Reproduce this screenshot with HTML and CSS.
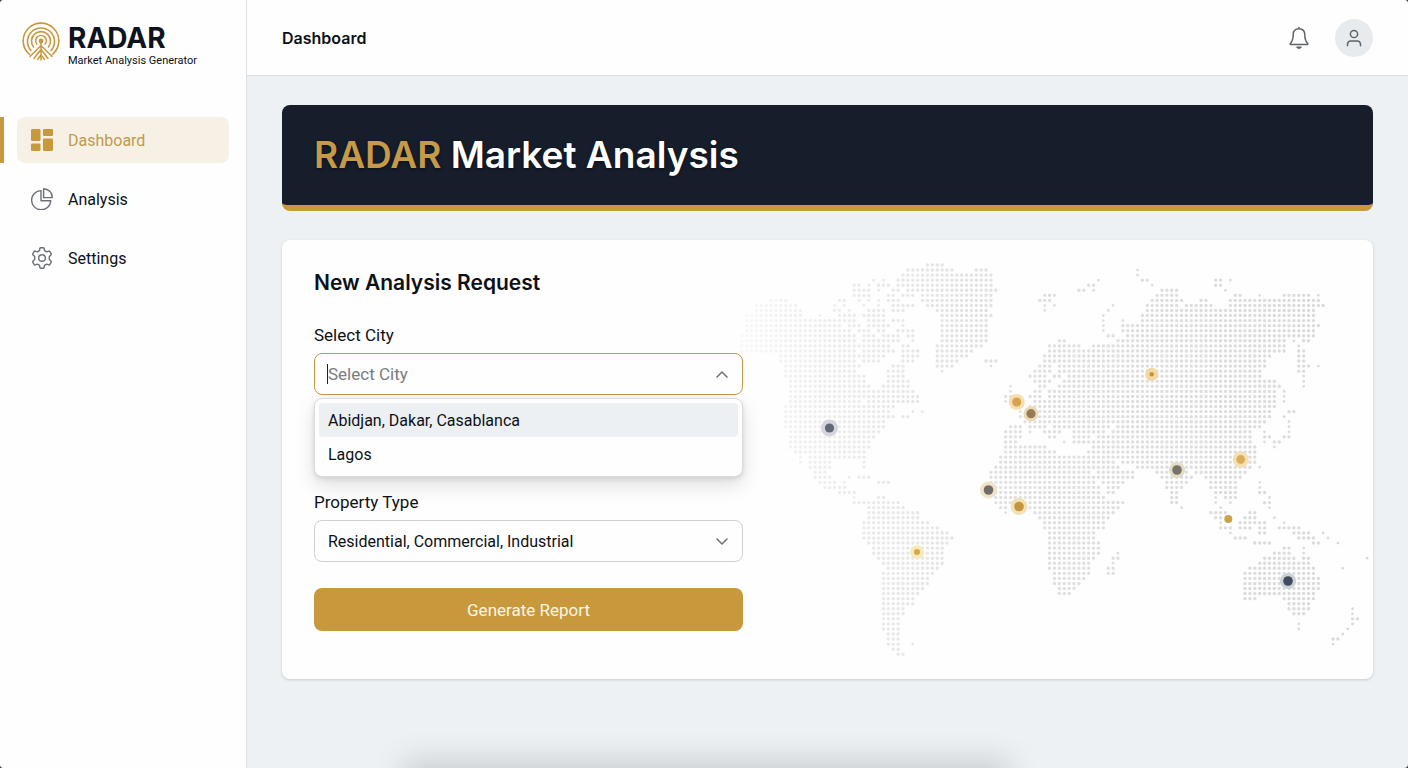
FILE: index.html
```html
<!DOCTYPE html>
<html lang="en">
<head>
<meta charset="utf-8">
<meta name="viewport" content="width=device-width, initial-scale=1">
<title>RADAR Market Analysis</title>
<link rel="stylesheet" href="styles.css">
</head>
<body>
<div class="app">
  <aside class="sidebar">
    <div class="brand">
      <svg class="brand-logo" viewBox="0 0 38 40" aria-hidden="true">
        <g fill="none" stroke="#c8993c" stroke-width="1.600" stroke-linecap="round">
          <path d="M7.500 32.500A17.800 17.800 0 1 1 30.500 32.500"/>
          <path d="M9 28.500A13.500 13.500 0 1 1 29 28.500"/>
          <path d="M11.500 25A9.500 9.500 0 1 1 26.500 25"/>
          <path d="M14.800 22A5.300 5.300 0 1 1 23.200 22"/>
          <path d="M19 20v18M18 24.500L8 34.500M20 24.500L30 34.500M18.500 28L12 36.500M19.500 28L26 36.500M19 33L15.500 37.500M19 33L22.500 37.500" stroke-width="1.500"/>
        </g>
        <circle cx="19" cy="19" r="2.400" fill="#c8993c"/>
      </svg>
      <div>
        <div class="brand-name">RADAR</div>
        <div class="brand-tagline">Market Analysis Generator</div>
      </div>
    </div>
    <nav class="nav">
      <a class="nav-item active" href="#dashboard" aria-current="page">
        <svg class="nav-icon" viewBox="0 0 22 22" aria-hidden="true" fill="#c8993c"><rect x="0" y="0" width="9.500" height="12" rx="1.200"/><rect x="12" y="0" width="10" height="7" rx="1.200"/><rect x="0" y="14.500" width="9.500" height="7.500" rx="1.200"/><rect x="12" y="9.500" width="10" height="12.500" rx="1.200"/></svg>
        Dashboard
      </a>
      <a class="nav-item" href="#analysis">
        <svg class="nav-icon" viewBox="0 0 22 22" aria-hidden="true" fill="none" stroke="#6b6f76" stroke-width="1.400" stroke-linejoin="round"><path d="M10 2.600A9.600 9.600 0 1 0 19.800 12.700H10Z"/><path d="M12.600 0.700V9.600H21.300A8.800 8.800 0 0 0 12.600 0.700Z"/></svg>
        Analysis
      </a>
      <a class="nav-item" href="#settings">
        <svg class="nav-icon" viewBox="0 0 22 22" aria-hidden="true" fill="none" stroke="#6b6f76" stroke-width="1.400" stroke-linejoin="round"><path d="M8.900 1.500Q9 0.700 9.800 0.700H12.200Q13 0.700 13.100 1.500L13.500 3.600L15.700 4.900L17.700 4.100Q18.500 3.900 18.900 4.600L20.100 6.700Q20.500 7.400 19.900 8L18.300 9.600V12.400L19.900 14Q20.500 14.600 20.100 15.300L18.900 17.400Q18.500 18.100 17.700 17.900L15.700 17.100L13.500 18.400L13.100 20.500Q13 21.300 12.200 21.300H9.800Q9 21.300 8.900 20.500L8.500 18.400L6.300 17.100L4.300 17.900Q3.500 18.100 3.100 17.400L1.900 15.300Q1.500 14.600 2.100 14L3.700 12.400V9.600L2.100 8Q1.500 7.400 1.900 6.700L3.100 4.600Q3.500 3.900 4.300 4.100L6.300 4.900L8.500 3.600Z"/><circle cx="11" cy="11" r="3.300"/></svg>
        Settings
      </a>
    </nav>
  </aside>

  <div class="main">
    <header class="topbar">
      <span class="topbar-title">Dashboard</span>
      <div class="topbar-actions">
        <button class="icon-button" type="button" aria-label="Notifications">
          <svg width="20" height="24" viewBox="0 0 20 24" fill="none" stroke="#5f646b" stroke-width="1.500" stroke-linecap="round" stroke-linejoin="round"><path d="M10 2.800C6 2.800 4.200 5.600 4.200 8.800C4.200 14 3.200 15.600 1.200 17.800V18.500H18.800V17.800C16.800 15.600 15.800 14 15.800 8.800C15.800 5.600 14 2.800 10 2.800ZM10 2.800V1.600"/><path d="M8 21.300Q10 23 12 21.300Z" fill="#5f646b"/></svg>
        </button>
        <button class="avatar" type="button" aria-label="Account">
          <svg width="16" height="18" viewBox="0 0 16 18" fill="none" stroke="#5f646b" stroke-width="1.500" stroke-linecap="round"><circle cx="8" cy="5" r="3.600"/><path d="M1.500 16.700V15A3.400 3.400 0 0 1 4.900 11.900H11.100A3.400 3.400 0 0 1 14.500 15V16.700"/></svg>
        </button>
      </div>
    </header>

    <main class="content">
      <section class="banner">
        <h1 class="banner-title"><span class="gold">RADAR</span> Market Analysis</h1>
      </section>

      <section class="card">
        <form class="request">
          <h2 class="request-title">New Analysis Request</h2>
          <label class="label" for="city">Select City</label>
          <div class="control">
            <input class="field field-open" id="city" type="text" placeholder="Select City" role="combobox" aria-expanded="true" aria-controls="city-list" autocomplete="off">
            <span class="caret"></span>
            <svg class="chevron" viewBox="0 0 12 7" aria-hidden="true"><path d="M1 6L6 1L11 6"/></svg>
          </div>
          <div class="menu" id="city-list" role="listbox">
            <button class="option selected" type="button" role="option" aria-selected="true">Abidjan, Dakar, Casablanca</button>
            <button class="option" type="button" role="option" aria-selected="false">Lagos</button>
          </div>
          <label class="label" for="property">Property Type</label>
          <div class="control">
            <select class="field" id="property"><option>Residential, Commercial, Industrial</option></select>
            <svg class="chevron" viewBox="0 0 12 7" aria-hidden="true"><path d="M1 1L6 6L11 1"/></svg>
          </div>
          <button class="submit" type="button">Generate Report</button>
        </form>
        <svg class="map" viewBox="0 0 630 372" role="img" aria-label="World map">
          <defs>
            <linearGradient id="fade" gradientUnits="userSpaceOnUse" x1="-11" y1="0" x2="630" y2="0">
              <stop offset="0" stop-color="#f9f9fa"/>
              <stop offset="0.120" stop-color="#efeff0"/>
              <stop offset="0.400" stop-color="#e1e1e2"/>
              <stop offset="1" stop-color="#d9dada"/>
            </linearGradient>
          </defs>
          <path id="land" fill="url(#fade)"/>
          <g id="pins"></g>
        </svg>
      </section>
    </main>
  </div>
</div>
<script src="map.js"></script>
</body>
</html>
```
FILE: styles.css
```css
* { box-sizing: border-box; }

body {
  margin: 0;
  background: #3a3d42;
  color: #0d1117;
  font-family: Roboto, "Liberation Sans", sans-serif;
  font-size: 16px;
}

button, input, select { font: inherit; color: inherit; }

.app {
  display: flex;
  min-height: 100vh;
  border-radius: 4px;
  overflow: hidden;
  background: #edf1f3;
}

.sidebar {
  flex: 0 0 247px;
  background: #fefefe;
  border-right: 1px solid #dfe2e4;
}

.brand {
  display: flex;
  gap: 8px;
  padding: 22px 16px 0 22px;
}
.brand-logo { width: 38px; height: 40px; }
.brand-name {
  font-family: Inter, "Liberation Sans", sans-serif;
  font-size: 28px;
  font-weight: 700;
  line-height: 33px;
  color: #0d1320;
}
.brand-tagline {
  font-size: 11px;
  line-height: 12px;
  white-space: nowrap;
}

.nav {
  display: flex;
  flex-direction: column;
  gap: 13px;
  padding: 50px 17px 0;
}
.nav-item {
  position: relative;
  display: flex;
  align-items: center;
  gap: 15px;
  height: 46px;
  padding: 0 14px;
  border-radius: 8px;
  color: inherit;
  text-decoration: none;
}
.nav-item.active { background: #f7f1e5; color: #c09a50; }
.nav-item.active::before {
  content: "";
  position: absolute;
  inset: 0 auto 0 -17px;
  width: 4px;
  background: #c8993c;
}
.nav-icon { width: 22px; height: 22px; }

.main {
  position: relative;
  flex: 1;
  min-width: 0;
  overflow: hidden;
}
.main::after {
  content: "";
  position: absolute;
  top: 100%;
  left: 14%;
  right: 35%;
  height: 20px;
  box-shadow: 0 0 30px 6px rgba(60, 65, 65, 0.22);
}

.topbar {
  display: flex;
  align-items: center;
  justify-content: space-between;
  height: 76px;
  padding: 0 35px;
  background: #fefefe;
  border-bottom: 1px solid #dcdfe1;
}
.topbar-title {
  font-family: Inter, "Liberation Sans", sans-serif;
  font-weight: 600;
}
.topbar-actions { display: flex; align-items: center; gap: 26px; }
.icon-button, .avatar {
  display: grid;
  place-items: center;
  padding: 0;
  border: 0;
  background: none;
}
.avatar {
  width: 38px;
  height: 38px;
  border-radius: 50%;
  background: #e8ebee;
}

.content { padding: 29px 35px; }

.banner {
  padding: 25px 32px;
  border-bottom: 6px solid #c8993c;
  border-radius: 8px;
  background: #161d2b;
}
.banner-title {
  margin: 0;
  color: #fff;
  font-family: Inter, "Liberation Sans", sans-serif;
  font-size: 37px;
  font-weight: 600;
  line-height: 50px;
  text-shadow: 0 1px 3px rgba(0, 0, 0, 0.5);
}
.gold { color: #c59a48; }

.card {
  display: grid;
  grid-template-columns: 429fr 630fr;
  align-items: start;
  margin-top: 29px;
  padding: 27px 0 48px 32px;
  border-radius: 8px;
  background: #fefefe;
  box-shadow: 0 1px 3px rgba(30, 45, 55, 0.18);
}
.request { position: relative; z-index: 1; min-width: 0; }
.request-title {
  margin: 0 0 26px;
  font-family: Inter, "Liberation Sans", sans-serif;
  font-size: 21px;
  font-weight: 600;
  line-height: 32px;
}
.label {
  display: block;
  margin-bottom: 8px;
  font-size: 17px;
  line-height: 20px;
}
.control { position: relative; }
.field {
  display: block;
  width: 100%;
  height: 42px;
  padding: 0 40px 0 13px;
  border: 1px solid #cfd1d5;
  border-radius: 8px;
  background: #fefefe;
  appearance: none;
  outline: none;
}
.field-open { border-color: #c29b42; font-size: 17px; }
.field::placeholder { color: #797c81; opacity: 1; }
.caret {
  position: absolute;
  top: 11px;
  left: 13px;
  width: 1px;
  height: 20px;
  background: #222;
}
.chevron {
  position: absolute;
  top: 18px;
  right: 15px;
  width: 12px;
  height: 7px;
  fill: none;
  stroke: #6b6f76;
  stroke-width: 1.5;
  stroke-linecap: round;
  stroke-linejoin: round;
  overflow: visible;
  pointer-events: none;
}
.menu {
  margin: 3px 0 15px;
  padding: 4px 4px 5px;
  border: 1px solid #d9dbde;
  border-radius: 8px;
  background: #fefefe;
  box-shadow: 0 8px 20px rgba(0, 0, 0, 0.13), 0 2px 5px rgba(0, 0, 0, 0.1);
}
.option {
  display: block;
  width: 100%;
  height: 34px;
  padding: 0 9px;
  border: 0;
  border-radius: 4px;
  background: none;
  text-align: left;
}
.option.selected { background: #edf0f2; }
.submit {
  display: block;
  width: 100%;
  height: 43px;
  margin-top: 26px;
  border: 0;
  border-radius: 8px;
  background: #c8993c;
  color: #fbf5e6;
  font-size: 17px;
}

.map {
  display: block;
  width: 100%;
  margin-top: -10px;
  overflow: visible;
}

@media (max-width: 900px) {
  .sidebar { display: none; }
  .card { grid-template-columns: 1fr; padding-right: 32px; }
  .map { margin-top: 24px; }
}
```
FILE: map.js
```js
// Each entry is one row of land dots, as grid columns or column ranges.
const rows = [
  "40-43",
  "36-45 50-52 83",
  "35-45 46-53 83",
  "34-53 29 31 75 84-85 99-100 102",
  "25-26 28 30-32 34-53 73-74 86 99-100",
  "25-28 30 33-34 36-54 71-72 74 88-91 101",
  "25-28 32-33 35-37 39-53 64-66 87-91 103-104 108 113-118 120",
  "8-11 22-23 26 28 30 32-34 39-53 63-65 86-92 96-97 102-120",
  "5-13 21 23 27 30 33-37 40-53 64 66 78 85-91 93-98 102-121",
  "5-14 21-22 24 28-31 33-35 42-52 64 77 85-119",
  "3-14 18 22-25 27-31 43-53 76 84-119",
  "3-20 21-25 28-31 33-35 43-52 76 80 84-119",
  "3-22 24-26 28-32 35 43-52 76 80-120",
  "3-24 26-28 30-31 34-37 43-52 76 80-119",
  "2-25 27-29 31-34 36-37 43-52 77-78 81-119",
  "2-25 27-34 37 43-52 67-68 79-113 115 117-118",
  "2-32 35-36 42-51 65-71 74-113 116",
  "2-25 27-33 35-38 42-49 65-113 116-117",
  "10-31 35-38 42-48 64-110 116-117",
  "10-25 27-30 35-37 42-46 52-54 64-109 116-117",
  "11-26 33-35 42-45 53 63-65 67-109 116-118 120",
  "11-25 32-35 43 62-65 67-108 116-117",
  "11-27 32-35 61-64 66-67 69-108 117",
  "12-27 32-36 62-65 68-111 117",
  "12-28 31-36 57 63-64 67-112 117",
  "12-30 31-37 57 62-63 65-111 113",
  "12-30 31-38 56-57 61-63 65-111 113",
  "12-26 28-38 56 58-59 62-111 113",
  "11-33 61-111",
  "11-32 37 39 59 61-110 114-115",
  "11-33 35-36 59-110 113",
  "11-31 60-109 114",
  "11-31 57-59 61-64 66-77 79-108 114",
  "12-30 56-59 61 64-67 70-76 78-106 109 114",
  "12-29 56-59 65-66 70-73 75-106 109-110 113-114",
  "12-28 56-58 68 70-106 109 111-112",
  "12-28 56-64 74-107 111",
  "13-27 56-66 73-107",
  "14 16-27 55-107",
  "14 16-20 27 55-73 74-78 80-107",
  "16-20 27 54-73 74-79 83-106 108",
  "17-19 53-73 75-82 87-93 95-105",
  "17-20 24 26-28 53-74 75-82 88-94 97-104",
  "18-21 23 30-32 53-74 76-80 89-93 98-103 108",
  "19-23 53-75 77-79 89-92 98-103 108",
  "22-25 53-75 77-78 90-91 99-103 108-109",
  "25 30-31 54-76 90-91 99 101-103 110",
  "25-27 28-34 54-80 90-91 99 102 109-110",
  "28-35 55-56 58-79 92 100 110",
  "28-38 56 62-78 98-101 106-107",
  "28-38 63-77 99-100 105-107 111",
  "27-40 64-76 100 104-107 108-109 113",
  "27-42 64-76 100-102 104-106 108-109 112-116",
  "27-44 65-74 102 108-109 115-118 121",
  "27-45 65-74 103-105 116-119 122",
  "28-44 65-75 107-110 119-120 124",
  "29-43 65-75 113-114 117",
  "29-43 65-75 79 111-114 117",
  "30-43 65-74 78-79 109-115 117-118 130",
  "31-43 65-73 78 108-118",
  "32-42 65-73 77-78 106-119 125",
  "31-41 66-73 77-78 105-119",
  "31-40 66-72 105-120",
  "31-40 66-71 105-120",
  "31-39 67-70 105-120",
  "31-38 67-69 105-110 111-119",
  "31-37 105-107 113-119",
  "31-37 114-118",
  "31-35 114-118 127",
  "31-35 115-117 127",
  "31-34 127-128",
  "31-34 116 127",
  "31-34 116 126",
  "32-34 125",
  "32-34 123-124",
  "32-34 37 123",
  "33-34",
  "34-35"
];

const columnStep = 4.886;
const rowStep = 5.055;
const left = -11;
const top0 = 8;

function dot(x, y, r) {
  return `M${(x - r).toFixed(2)} ${y.toFixed(2)}a${r} ${r} 0 1 0 ${2 * r} 0a${r} ${r} 0 1 0 ${-2 * r} 0`;
}

let path = "";
rows.forEach((row, index) => {
  row.split(" ").forEach((part) => {
    const [from, to = from] = part.split("-").map(Number);
    const radius = from === to ? 1.4 : 1.7;
    for (let column = from; column <= to; column++) {
      path += dot(left + column * columnStep, top0 + index * rowStep, radius);
    }
  });
});
document.getElementById("land").setAttribute("d", path);

// x, y, dot radius, dot colour, halo radius, halo colour
const pins = [
  [86.5, 171, 4.6, "#626976", 8.5, "#d3d6de"],
  [273.7, 145, 4.6, "#d6a44f", 8, "#f6e0b2"],
  [288, 156.7, 4.6, "#967b5b", 7.5, "#ecdab5"],
  [408.7, 117.3, 2.2, "#c4933c", 6.5, "#f4d8a0"],
  [245.5, 233, 4.8, "#716c6a", 8.5, "#f1e4c6"],
  [276, 249.5, 4.8, "#c8963a", 8.5, "#f2e0b8"],
  [434, 213, 4.8, "#77736a", 8, "#e4dcc4"],
  [497.7, 202.5, 4.4, "#d8ae5b", 8, "#f5e0b2"],
  [485.3, 262, 4, "#c9a24a", 0, "none"],
  [545, 324, 4.8, "#3f4c5e", 8, "#cdd2d8"],
  [174, 295, 3, "#d8a84a", 6.8, "#f7eab8"]
];
document.getElementById("pins").innerHTML = pins.map(([x, y, r, fill, haloRadius, halo]) =>
  `<circle cx="${x}" cy="${y}" r="${haloRadius}" fill="${halo}"/><circle cx="${x}" cy="${y}" r="${r}" fill="${fill}"/>`
).join("");
```
